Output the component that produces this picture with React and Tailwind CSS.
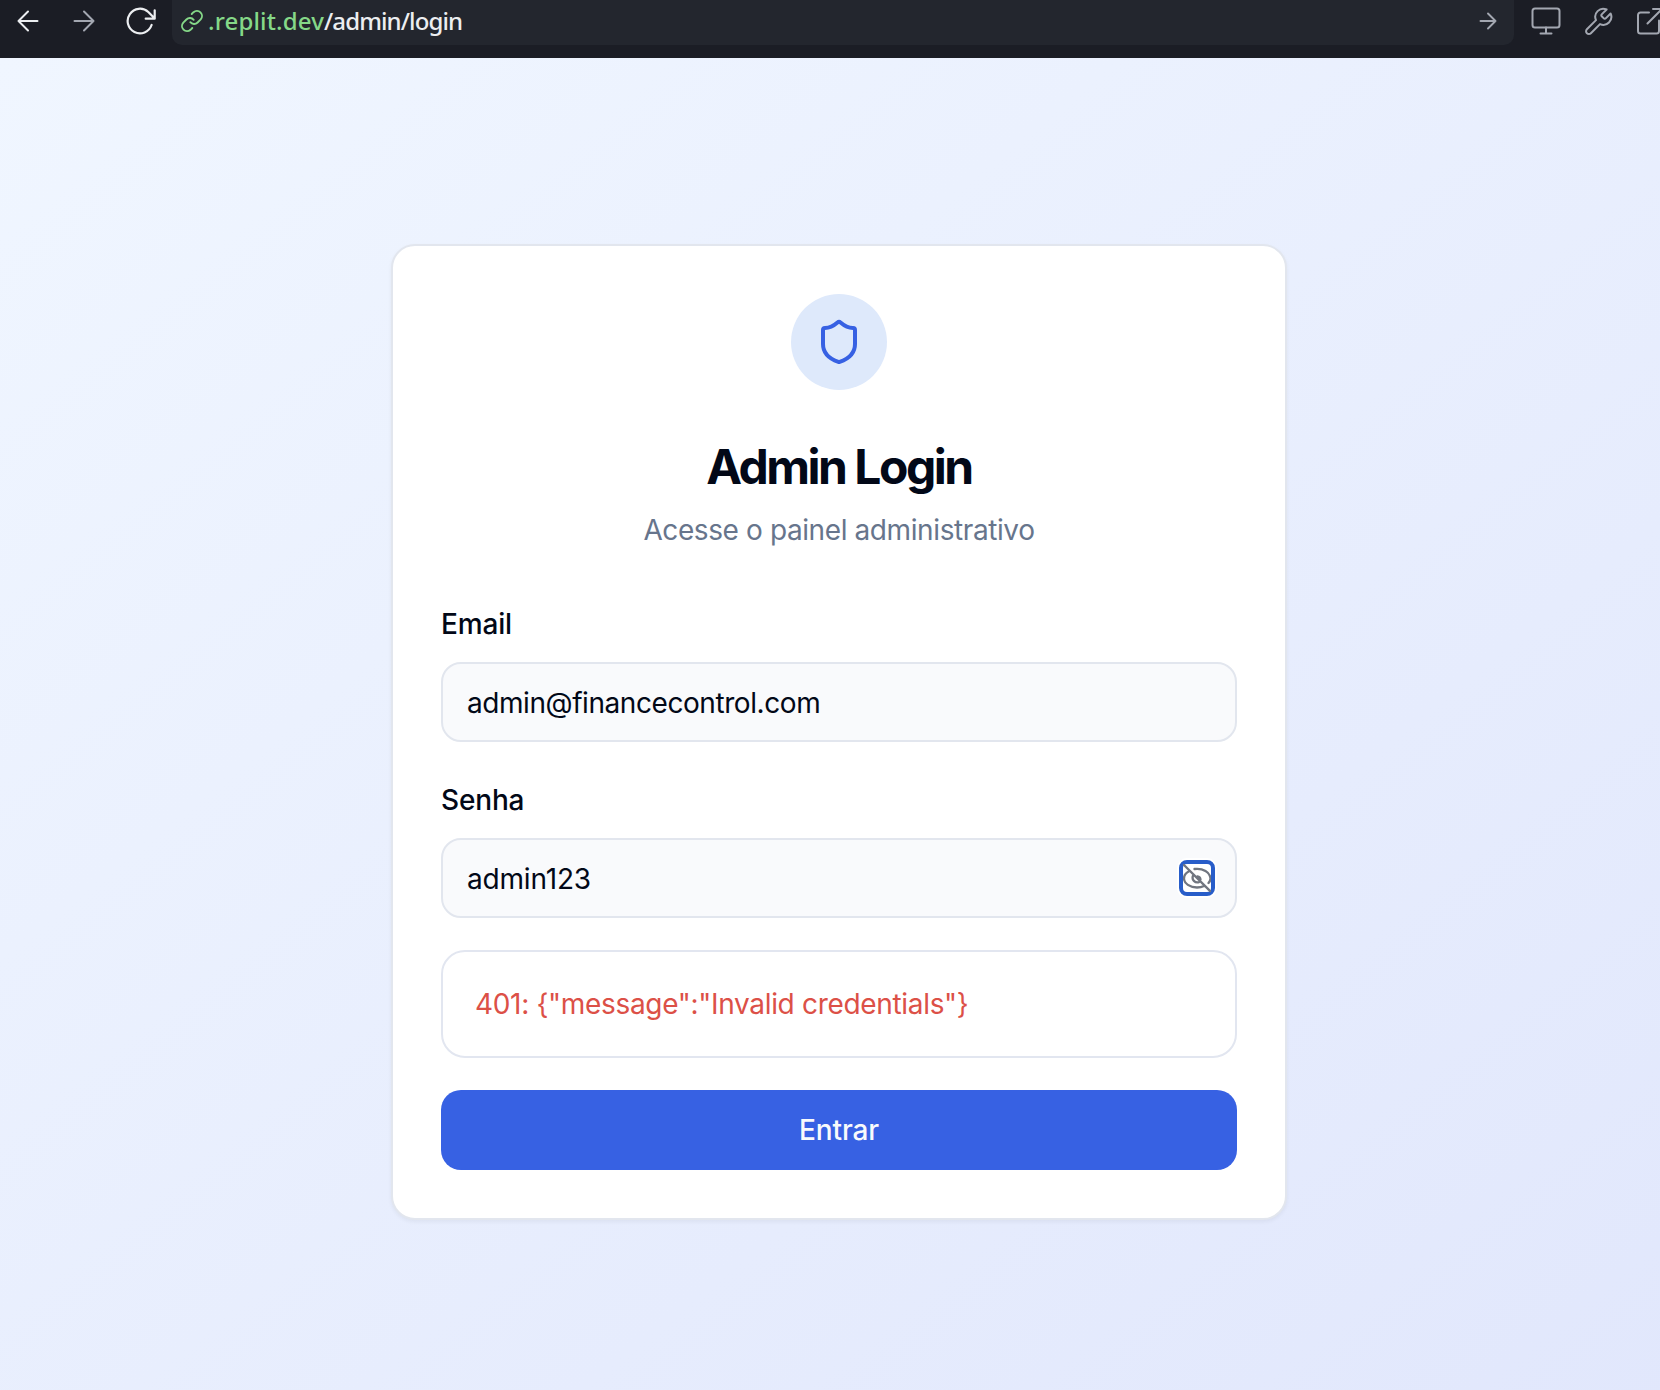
import { Shield } from "lucide-react";

function Icon({ className, size, children, stroke = 2 }) {
  return (
    <svg
      className={className}
      width={size[0]}
      height={size[1]}
      viewBox={`0 0 ${size[0]} ${size[1]}`}
      fill="none"
      stroke="currentColor"
      strokeWidth={stroke}
      strokeLinecap="round"
      strokeLinejoin="round"
    >
      {children}
    </svg>
  );
}

function BrowserBar() {
  return (
    <header className="flex h-[58px] w-full shrink-0 items-start overflow-hidden bg-[#1b1d25] text-[#a3a7b1]">
      <div className="flex h-[42px] w-[172px] shrink-0 items-center pl-[17px]">
        <Icon size={[22, 22]} className="shrink-0 text-[#eceef1]">
          <path d="M20.5 11H1.5M11 1.5 1.5 11l9.5 9.5" />
        </Icon>
        <Icon size={[22, 22]} className="ml-[34px] shrink-0">
          <path d="M1.5 11h19M11 1.5l9.5 9.5-9.5 9.5" />
        </Icon>
        <Icon size={[30, 28]} stroke={2.2} className="ml-[31px] shrink-0 text-[#eceef1]">
          <path d="M25.6 18A12.300 12.300 0 1 1 22.300 5L28.500 11.300M28.700 3.300v8.400h-9" />
        </Icon>
      </div>
      <div className="flex h-[45px] w-[1342px] shrink-0 items-center rounded-b-[10px] bg-[#23262e] pr-[17px] pb-[3px] pl-[8px]">
        <Icon size={[24, 24]} stroke={1.9} className="shrink-0 text-[#85d888]">
          <path d="M10.3 13.2a5 5 0 0 0 7.3.3l3.100-3.100a5.100 5.100 0 0 0-7.200-7.200l-1.800 1.800M13.700 10.800a5 5 0 0 0-7.300-.3l-3.100 3.100a5.100 5.100 0 0 0 7.200 7.200l1.800-1.800" />
        </Icon>
        <p className="ml-[4px] flex-1 font-['Noto_Sans',sans-serif] text-[24px] leading-[42px] font-medium tracking-[-0.9px] whitespace-nowrap text-[#eceef1]">
          <span className="tracking-[0.15px] text-[#85d888]">.replit.dev</span>/admin/login
        </p>
        <Icon size={[18, 18]} stroke={1.9} className="shrink-0">
          <path d="M1.5 9h15M9 1.5 16.5 9 9 16.5" />
        </Icon>
      </div>
      <div className="flex h-[42px] shrink-0 items-center pl-[17px]">
        <Icon size={[30, 28]} stroke={2} className="shrink-0">
          <rect x="1.5" y="1.5" width="27" height="19" rx="2.5" />
          <path d="M15 20.5v6M9.5 26.5h11" />
        </Icon>
        <Icon size={[30, 30]} stroke={2} className="ml-[22px] shrink-0">
          <path d="M18.7 8.4a1.3 1.3 0 0 0 0 1.9l2.100 2.100a1.300 1.300 0 0 0 1.900 0l4.900-4.900a8 8 0 0 1-10.600 10.600l-9.100 9.100a2.800 2.800 0 0 1-4-4l9.100-9.100A8 8 0 0 1 23.600 3.500z" />
        </Icon>
        <Icon size={[30, 28]} stroke={2} className="ml-[23px] shrink-0">
          <path d="M23 13.500V24a2.500 2.500 0 0 1-2.500 2.500h-16A2.500 2.500 0 0 1 2 24V8a2.500 2.500 0 0 1 2.500-2.500H13M17 2h9v9M11.500 16.500 26 2" />
        </Icon>
      </div>
    </header>
  );
}

function Field({ label, children }) {
  return (
    <div className="flex flex-col">
      <label className="text-[28px] leading-[28px] font-medium tracking-[-0.15px]">{label}</label>
      <div className="mt-[24px] flex h-[80px] items-center justify-between rounded-[20px] border-2 border-[#e2e6ee] bg-[#f9fafc] pt-[2px] pr-[20px] pl-[24px] text-[28px]">
        {children}
      </div>
    </div>
  );
}

function LoginCard() {
  return (
    <section className="flex h-[976px] w-[896px] flex-col rounded-[24px] border-2 border-[#e2e6ee] bg-white px-[48px] pt-[48px] text-[#020817] shadow-[0_2px_4px_rgba(0,0,0,0.05)]">
      <div className="flex size-[96px] shrink-0 items-center justify-center self-center rounded-full bg-[#dee9fb]">
        <Shield className="size-[48px] text-[#3761e3]" strokeWidth={2} />
      </div>
      <h1 className="mt-[53px] text-center text-[48px] leading-[48px] font-bold tracking-[-2.5px]">Admin Login</h1>
      <p className="mt-[19px] mb-[60px] text-center text-[28px] leading-[40px] tracking-[-0.4px] text-[#67758c]">
        Acesse o painel administrativo
      </p>
      <form className="flex flex-col">
        <Field label="Email">
          <span className="tracking-[-0.43px]">admin@financecontrol.com</span>
        </Field>
        <div className="mt-[44px]">
          <Field label="Senha">
            <span className="tracking-[-0.18px]">admin123</span>
            <button
              type="button"
              className="-mt-[2px] flex size-[36px] items-center justify-center rounded-[8px] border-4 border-[#285dc9] bg-white ring-2 ring-white"
            >
              <Icon size={[28, 28]} stroke={2.3} className="shrink-0 text-[#70757f]">
                <path d="M1 1 27.5 27.5M6.500 7C3 8.800 1 11.500 1 14.500c0 5 6 9 13 9 2.600 0 5-.5 7-1.500M11.500 5c8.500-1 15.500 3 16 9.500 0 1.800-.8 3.200-2 4.500M10 11.800c-1.600 4 2 7.500 6 6.400M14.500 12.500c1.700.2 2.800 1.300 3 3" />
              </Icon>
            </button>
          </Field>
        </div>
        <div
          role="alert"
          className="mt-[32px] flex h-[108px] items-center rounded-[24px] border-2 border-[#e2e6f0] pl-[32px] text-[28px] tracking-[-0.32px] text-[#dc5047]"
        >
          {'401: {"message":"Invalid credentials"}'}
        </div>
        <button
          type="button"
          className="mt-[32px] h-[80px] rounded-[20px] bg-[#3761e3] text-[28px] font-medium tracking-[-0.1px] text-[#f8fafc]"
        >
          Entrar
        </button>
      </form>
    </section>
  );
}

export default function App() {
  return (
    <div className="flex h-[1390px] w-[1660px] flex-col overflow-hidden font-['Inter',sans-serif]">
      <BrowserBar />
      <main className="flex h-[1348px] w-[1678px] shrink-0 items-center justify-center bg-linear-to-br/srgb from-[#f0f6ff] to-[#e1e7fc]">
        <LoginCard />
      </main>
    </div>
  );
}
